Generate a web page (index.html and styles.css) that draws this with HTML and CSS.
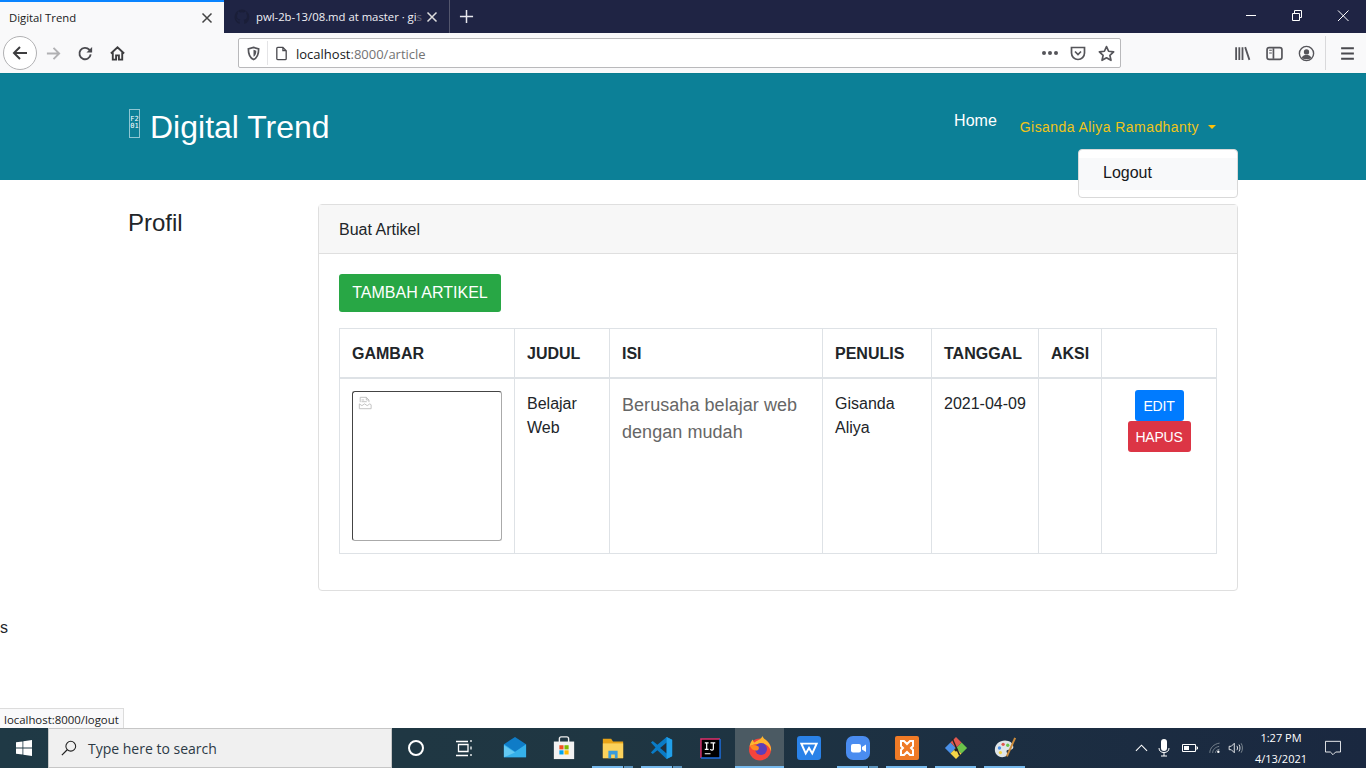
FILE: index.html
```html
<!DOCTYPE html>
<html lang="en">
<head>
<meta charset="utf-8">
<title>Digital Trend</title>
<link rel="stylesheet" href="styles.css">
</head>
<body>
<div class="tabbar">
  <div class="tab tab-active">
    <span class="tab-title">Digital Trend</span>
    <svg class="tab-x" viewBox="0 0 12 12"><path d="M1.500 1.500l9 9M10.500 1.500l-9 9" stroke="#444" stroke-width="1.500"/></svg>
  </div>
  <div class="tab tab-idle">
    <svg class="tab-fav" viewBox="0 0 16 16"><path d="M8 .5a7.500 7.500 0 0 0-2.400 14.600v-2.600c-2 .4-2.500-1-2.700-1.500-.6-1-1.300-.9-.6-1.200.9 0 1.400 1 1.900 1.400.6.400 1.300.3 1.600 0 .1-.5.300-.8.500-1C4.600 10.500 3 9.700 3 6.900c0-.9.300-1.600.8-2.200-.1-.3-.3-1 .1-2.100 0 0 .7-.2 2.200.8a7.500 7.500 0 0 1 3.800 0c1.500-1 2.200-.8 2.200-.8.400 1.100.2 1.800.1 2.100.5.600.8 1.300.8 2.200 0 2.800-1.600 3.600-3.300 3.800.3.200.5.700.5 1.300v3.100A7.500 7.500 0 0 0 8 .5z" fill="#1a1e38"/></svg>
    <span class="tab-title tab-title-idle">pwl-2b-13/08.md at master · gi<span class="fade">s</span></span>
    <svg class="tab-x" viewBox="0 0 12 12"><path d="M1.500 1.500l9 9M10.500 1.500l-9 9" stroke="#ddd" stroke-width="1.500"/></svg>
  </div>
  <div class="newtab"><svg viewBox="0 0 16 16"><path d="M8 1v14M1 8h14" stroke="#e8e8ee" stroke-width="1.600"/></svg></div>
  <div class="winctl">
    <svg viewBox="0 0 46 32"><path d="M18 15.500h10" stroke="#fff"/></svg>
    <svg viewBox="0 0 46 32"><path d="M18.500 13.500h7v7h-7zM20.500 13v-2.500h7v7h-2" fill="none" stroke="#fff"/></svg>
    <svg viewBox="0 0 46 32"><path d="M18 10.500l10.500 10.500M28.500 10.500l-10.500 10.500" stroke="#fff"/></svg>
  </div>
</div>
<div class="toolbar">
  <div class="backbtn"><svg viewBox="0 0 18 18"><path d="M16 9H3M9 3L3 9l6 6" fill="none" stroke="#3d3d3f" stroke-width="2"/></svg></div>
  <svg class="tool tool-fwd" viewBox="0 0 18 18"><path d="M2 9h13M9 3l6 6-6 6" fill="none" stroke="#b1b1b3" stroke-width="2"/></svg>
  <svg class="tool tool-reload" viewBox="0 0 18 18"><path d="M14.500 10a6 6 0 1 1-1.500-5l2 2" fill="none" stroke="#4a4a4f" stroke-width="2"/><path d="M16 2v6h-6z" fill="#4a4a4f"/></svg>
  <svg class="tool tool-home" viewBox="0 0 18 18"><path d="M2 9l7-6.500L16 9M4 8v7.500h3.500V11h3v4.500H14V8" fill="none" stroke="#3d3d3f" stroke-width="2"/></svg>
  <div class="urlbar">
    <svg class="shield" viewBox="0 0 16 16"><path d="M8 1.500l5.500 1.500c0 6-1 9.500-5.500 11.500C3.500 12.500 2.500 9 2.500 3z" fill="none" stroke="#55555a" stroke-width="1.800"/><path d="M8 4v7.500c2-1.200 3-3 3-6.500z" fill="#55555a"/></svg>
    <span class="urlsep"></span>
    <svg class="pageicon" viewBox="0 0 16 16"><path d="M3 2.500a1 1 0 0 1 1-1h5.500l3.500 3.500v8.500a1 1 0 0 1-1 1H4a1 1 0 0 1-1-1z M9.500 1.500v3.500H13" fill="none" stroke="#4a4a4f" stroke-width="1.400"/></svg>
    <span class="url">localhost<span class="url-dim">:8000/article</span></span>
    <span class="urlspace"></span>
    <span class="dots"><i></i><i></i><i></i></span>
    <svg class="pocket" viewBox="0 0 16 16"><path d="M1.500 2.500h13v5.500a6.500 6.500 0 0 1-13 0z" fill="none" stroke="#55555a" stroke-width="1.700"/><path d="M5 6.500l3 3 3-3" fill="none" stroke="#55555a" stroke-width="1.700"/></svg>
    <svg class="star" viewBox="0 0 16 16"><path d="M8 1.500l2 4.400 4.700.6-3.500 3.200 1 4.700L8 12l-4.200 2.400 1-4.700L1.300 6.500 6 5.900z" fill="none" stroke="#55555a" stroke-width="1.600" stroke-linejoin="round"/></svg>
  </div>
  <div class="toolright">
    <svg class="tool" viewBox="0 0 16 16"><path d="M2 2v12M5 2v12M8 2v12M10.500 2l4 12" fill="none" stroke="#55555a" stroke-width="1.700"/></svg>
    <svg class="tool" viewBox="0 0 16 16"><rect x="1" y="2.500" width="14" height="11" rx="2" fill="none" stroke="#55555a" stroke-width="1.600"/><path d="M7 3v10" stroke="#55555a" stroke-width="1.600"/><path d="M3 5h2.500M3 7.500h2.500" stroke="#55555a"/></svg>
    <svg class="tool" viewBox="0 0 16 16"><circle cx="8" cy="8" r="6.700" fill="none" stroke="#55555a" stroke-width="1.300"/><circle cx="8" cy="6.500" r="2.500" fill="#55555a"/><path d="M3.500 12c1-2 2.500-2.500 4.500-2.500s3.500.5 4.500 2.500c-2 2-7 2-9 0z" fill="#55555a"/></svg>
    <span class="toolsep"></span>
    <svg class="tool" viewBox="0 0 16 16"><path d="M2 3h12M2 8h12M2 13h12" stroke="#4a4a4f" stroke-width="1.800"/></svg>
  </div>
</div>
<div class="page">
  <header class="site-header">
    <div class="container nav">
      <a class="brand"><span class="tofu"><span>F2</span><span>01</span></span><span>Digital Trend</span></a>
      <div class="navlinks">
        <a class="nav-home">Home</a>
        <a class="nav-user">Gisanda Aliya Ramadhanty<span class="caret"></span></a>
      </div>
      <div class="dropdown"><a class="dropdown-item">Logout</a></div>
    </div>
  </header>
  <main class="container content">
    <h4 class="side-title">Profil</h4>
    <section class="card">
      <div class="card-header">Buat Artikel</div>
      <div class="card-body">
        <a class="btn-add">TAMBAH ARTIKEL</a>
        <table class="table">
          <thead>
            <tr>
              <th class="c1">GAMBAR</th>
              <th class="c2">JUDUL</th>
              <th class="c3">ISI</th>
              <th class="c4">PENULIS</th>
              <th class="c5">TANGGAL</th>
              <th class="c6">AKSI</th>
              <th class="c7"></th>
            </tr>
          </thead>
          <tbody>
            <tr>
              <td>
                <div class="broken"><svg viewBox="0 0 16 16"><path d="M2.500 7V1.500h7l3 3V7M9.500 1.500v3h3M4 4.500h3M4 6.500h6" fill="none" stroke="#bbb"/><path d="M1.500 9l3 2 3-2 3 2 3-2 1.500 1v4.500h-13.500z" fill="none" stroke="#bbb"/></svg></div>
              </td>
              <td>Belajar Web</td>
              <td class="isi">Berusaha belajar web dengan mudah</td>
              <td>Gisanda Aliya</td>
              <td>2021-04-09</td>
              <td></td>
              <td class="aksi"><a class="btn-sm btn-edit">EDIT</a><a class="btn-sm btn-del">HAPUS</a></td>
            </tr>
          </tbody>
        </table>
      </div>
    </section>
  </main>
  <p class="stray">s</p>
  <div class="status">localhost:8000/logout</div>
</div>
<footer class="taskbar">
  <div class="start"><svg viewBox="0 0 16 16"><path d="M0 2.300l6.500-.9v6.200H0zM7.300 1.300L16 0v7.600H7.300zM0 8.400h6.500v6.200L0 13.700zM7.300 8.400H16V16l-8.700-1.200z" fill="#fff"/></svg></div>
  <div class="search">
    <svg viewBox="0 0 18 18"><circle cx="11" cy="7" r="5.500" fill="none" stroke="#222" stroke-width="1.200"/><path d="M7 11l-6 6" stroke="#222" stroke-width="1.400"/></svg>
    <span>Type here to search</span>
  </div>
  <div class="apps">
    <div class="app app-cortana"><svg viewBox="0 0 24 24"><circle cx="12" cy="12" r="7" fill="none" stroke="#fff" stroke-width="2"/></svg></div>
    <div class="app app-tasks"><svg viewBox="0 0 24 24"><path d="M5 5.500h12M5 19.500h12M7.500 8.500h9.500v7H7.500zM20 4v2M20 10.500v3M20 18v2" fill="none" stroke="#fff" stroke-width="1.300"/></svg></div>
    <div class="app"><svg viewBox="0 0 26 26"><path d="M1 9l12-8 12 8v14H1z" fill="#0f7cc7"/><path d="M1 9l12 8 12-8v14H1z" fill="#35b0ea"/><path d="M1 10l12 8L1 23z" fill="#63c8f2"/></svg></div>
    <div class="app"><svg viewBox="0 0 26 26"><path d="M8 7V3a2 2 0 0 1 2-2h6a2 2 0 0 1 2 2v4" fill="none" stroke="#eee" stroke-width="1.500"/><rect x="2" y="6" width="22" height="19" fill="#f2f2f2"/><rect x="8" y="10" width="4.500" height="4.500" fill="#f25022"/><rect x="13.500" y="10" width="4.500" height="4.500" fill="#7fba00"/><rect x="8" y="15.500" width="4.500" height="4.500" fill="#00a4ef"/><rect x="13.500" y="15.500" width="4.500" height="4.500" fill="#ffb900"/></svg></div>
    <div class="app app-run app-split"><svg viewBox="0 0 26 26"><path d="M2 3h9l2 3h11v18H2z" fill="#e8a317"/><path d="M2 8h22v16H2z" fill="#fbd25c"/><path d="M8 24v-8h10v8h-3v-4h-4v4z" fill="#3a9bdc"/></svg></div>
    <div class="app app-run app-split"><svg viewBox="0 0 26 26"><path d="M18 1l6 3v18l-6 3-10-9.500-5 4-2-1.500 5-5.500-5-5.500 2-1.500 5 4z" fill="#0a7bc6"/><path d="M18 7v12l-7-6z" fill="#1f2f3d"/><path d="M18 1l6 3v18l-6 3z" fill="#21a0ea"/></svg></div>
    <div class="app app-ij"><svg viewBox="0 0 22 22"><rect x="1" y="1" width="20" height="20" fill="#000"/><path d="M1 21V1h20" fill="none" stroke="#e0306e" stroke-width="1.500"/><path d="M21 1v20H1" fill="none" stroke="#1e6fe0" stroke-width="1.500"/><path d="M5 5h4M7 5v7M5 12h4M11 5h5M14 5v6a1.500 1.500 0 0 1-3 .500M5 16.500h6" fill="none" stroke="#fff" stroke-width="1.300"/></svg></div>
    <div class="app app-run app-on"><svg viewBox="0 0 26 26"><circle cx="13" cy="14.500" r="11" fill="#f5443c"/><path d="M2.500 12C3 8 4.500 5.500 6 4.500c0 1.500.5 2.500 1.500 3C10 5 14 5 15.500 1c1 3 3 3 5 5.500 3 3 4 7 3.500 10-1-4-4-8-10-8-3 0-5 1-7 1-2 .500-4 1-5 2.500z" fill="#ffb52e"/><circle cx="14" cy="14" r="6" fill="#5c3fb8"/><path d="M3 11c3-2 6-1 8.500.500 1 2 0 3.500-1.500 4-2.500.500-6-1-7-4.500z" fill="#ff8a1f"/></svg></div>
    <div class="app"><svg viewBox="0 0 22 22"><rect width="22" height="22" rx="3" fill="#2a82e8"/><path d="M4 7h14l-4 9-3-5-3 5z" fill="none" stroke="#fff" stroke-width="1.800"/></svg></div>
    <div class="app app-run app-split"><svg viewBox="0 0 24 24"><rect width="24" height="24" rx="7" fill="#4a8cf0"/><rect x="5" y="8" width="10" height="8.500" rx="2" fill="#fff"/><path d="M16 11l4-2.500v7.500l-4-2.500z" fill="#fff"/></svg></div>
    <div class="app app-run"><svg viewBox="0 0 24 24"><rect width="24" height="24" rx="2" fill="#ef7a26"/><path d="M6 5h3l3 3 3-3h3v5l-2 2 2 2v5h-3l-3-3-3 3H6v-5l2-2-2-2z" fill="none" stroke="#fff" stroke-width="2"/></svg></div>
    <div class="app app-run"><svg viewBox="0 0 26 26"><path d="M7 7l6 6-6 6-6-6z" fill="#4a90e8"/><path d="M19 7l6 6-6 6-6-6z" fill="#6cc24a"/><path d="M13 13l6 6-6 6-6-6z" fill="#f5d547"/><path d="M13 1l6 6-6 6-6-6z" fill="#e0584f"/><path d="M9 3l8 18" stroke="#222" stroke-width="1.500"/><circle cx="13" cy="15" r="1.800" fill="#222"/></svg></div>
    <div class="app app-run"><svg viewBox="0 0 26 26"><path d="M2 15c0-6 5-10 11-10 5 0 9 3 9 7 0 3-3 3-5 3s-3 1-2 3c1 3-1 5-5 5-5 0-8-4-8-8z" fill="#dfe5e8"/><circle cx="7" cy="13" r="1.800" fill="#4a90e8"/><circle cx="11" cy="9" r="1.800" fill="#e0584f"/><circle cx="16" cy="10" r="1.800" fill="#6cc24a"/><circle cx="8" cy="18" r="1.800" fill="#f5d547"/><path d="M15 22L24 2" stroke="#c98a3c" stroke-width="2.200"/></svg></div>
  </div>
  <div class="tray">
    <svg class="t-chev" viewBox="0 0 14 8"><path d="M1 7l6-6 6 6" fill="none" stroke="#fff" stroke-width="1.200"/></svg>
    <svg class="t-mic" viewBox="0 0 12 18"><rect x="3" y="0" width="6" height="12" rx="3" fill="#fff"/><path d="M1 9c0 3 2 4.500 5 4.500s5-1.500 5-4.500M6 13.500V17M3 17h6" fill="none" stroke="#fff"/></svg>
    <svg class="t-bat" viewBox="0 0 16 10"><path d="M.5 1.500h13v7H.5zM14 4h1.500v2H14" fill="none" stroke="#fff"/><rect x="2" y="3" width="5" height="4" fill="#fff"/></svg>
    <svg class="t-wifi" viewBox="0 0 16 14"><path d="M1 13C1 7 6 2 13 1M4.500 13c0-4 3-7 8-8M8 13c0-2 1.500-4 5-4.500" fill="none" stroke="#8a949c"/><circle cx="11.500" cy="11.500" r="1.500" fill="#fff"/></svg>
    <svg class="t-vol" viewBox="0 0 18 14"><path d="M1 5h2.500L7 1.500v11L3.500 9H1z" fill="none" stroke="#fff"/><path d="M10 4.500c1 1.500 1 3.500 0 5M12.500 3c1.500 2.500 1.500 5.500 0 8" fill="none" stroke="#fff"/><path d="M15 1.500c2 3 2 8 0 11" fill="none" stroke="#8a949c"/></svg>
    <div class="clock"><span>1:27 PM</span><span>4/13/2021</span></div>
    <svg class="t-note" viewBox="0 0 18 16"><path d="M.5.500h17v12h-5.500l-3 3-3-3H.5z" fill="none" stroke="#fff"/></svg>
  </div>
</footer>
</body>
</html>
```

FILE: styles.css
```css
* { box-sizing: border-box; }
html, body { margin: 0; height: 768px; overflow: hidden; }
body {
  display: flex;
  flex-direction: column;
  width: 1366px;
  font-family: "Liberation Sans", Arial, sans-serif;
  font-size: 16px;
  line-height: 24px;
  color: #212529;
  background: #fff;
}

/* Browser tab strip */
.tabbar {
  display: flex;
  height: 33px;
  flex: none;
  background: #1f2444;
  font-family: "Open Sans", "Noto Sans", sans-serif;
  font-size: 11.3px;
}
.tab { display: flex; align-items: center; height: 33px; }
.tab-active {
  width: 224px;
  padding: 0 11px 0 9px;
  background: #f9f9fa;
  border-top: 2px solid #0a84ff;
  color: #18191a;
}
.tab-idle {
  width: 226px;
  padding: 0 11px 0 10px;
  color: #f0f0f4;
  border-right: 1px solid #53566d;
}
.tab-title { flex: 1; white-space: nowrap; }
.tab-title-idle { margin-left: 6px; }
.fade { opacity: .35; }
.tab-x { width: 12px; height: 12px; flex: none; }
.tab-fav { width: 16px; height: 16px; flex: none; }
.newtab { width: 32px; display: flex; align-items: center; justify-content: center; }
.newtab svg { width: 15px; height: 15px; }
.winctl { margin-left: auto; display: flex; }
.winctl svg { width: 46px; height: 32px; }

/* Browser toolbar */
.toolbar {
  display: flex;
  align-items: center;
  height: 41px;
  flex: none;
  background: #f9f9fa;
  padding-left: 3px;
  border-bottom: 1px solid #0a7d90;
}
.backbtn {
  width: 34px;
  height: 34px;
  border: 1px solid #b1b1b3;
  border-radius: 50%;
  background: #fff;
  display: flex;
  align-items: center;
  justify-content: center;
}
.backbtn svg { width: 18px; height: 18px; }
.tool { width: 17px; height: 17px; flex: none; }
.tool-fwd { margin-left: 8px; }
.tool-reload { margin-left: 15px; }
.tool-home { margin-left: 15px; }
.urlbar {
  display: flex;
  align-items: center;
  width: 883px;
  height: 30px;
  margin-left: 112px;
  background: #fff;
  border: 1px solid #b9b9bb;
  border-radius: 2px;
  font-family: "Open Sans", "Noto Sans", sans-serif;
  font-size: 13px;
}
.shield { width: 15px; height: 15px; margin-left: 7px; flex: none; }
.urlsep { width: 1px; height: 24px; background: #e4e4e6; margin-left: 6px; }
.pageicon { width: 15px; height: 15px; margin-left: 6px; flex: none; }
.url { margin-left: 7px; padding-top: 2px; color: #18191a; }
.url-dim { color: #737373; }
.urlspace { flex: 1; }
.dots { display: flex; gap: 2px; margin-right: 12px; }
.dots i { width: 4px; height: 4px; border-radius: 50%; background: #55555a; }
.pocket { width: 16px; height: 16px; margin-right: 12px; flex: none; }
.star { width: 17px; height: 17px; margin-right: 5px; flex: none; }
.toolright { display: flex; align-items: center; margin-left: 113px; gap: 15px; }
.toolsep { width: 1px; height: 34px; background: #d9d9db; margin: 0 -2px 0 -5px; }

/* Page */
.page {
  position: relative;
  flex: 1;
  min-height: 0;
}
.container { width: 1110px; margin: 0 auto; }
.site-header {
  height: 106px;
  background: #0c8097;
}
.nav { position: relative; display: flex; height: 106px; }
.brand { display: flex; align-items: center; gap: 10px; color: #fff; font-size: 32px; line-height: 40px; margin-left: 1px; height: 105px; }
.tofu {
  width: 11px;
  height: 29px;
  margin-bottom: 7px;
  border: 1px solid #8fc6d2;
  display: flex;
  flex-direction: column;
  align-items: center;
  justify-content: center;
  font-family: "DejaVu Sans Mono", monospace;
  font-size: 7px;
  line-height: 7px;
}
.navlinks { display: flex; margin-left: auto; margin-right: 22px; padding-top: 36px; }
.nav-home { color: #fff; font-size: 16px; line-height: 22px; margin-right: 23px; }
.nav-user { display: flex; align-items: center; height: 34px; color: #f0c419; font-size: 14px; letter-spacing: .43px; }
.caret { width: 0; height: 0; margin-left: 9px; border: 4.500px solid transparent; border-top-color: #ffc107; border-bottom-width: 0; }
.dropdown {
  position: absolute;
  right: 0;
  top: 75px;
  width: 160px;
  height: 49px;
  padding: 8px 0;
  background: #fff;
  border: 1px solid #d9d9d9;
  border-radius: 4px;
}
.dropdown-item { display: block; padding: 3px 24px; height: 32px; background: #f8f9fa; color: #16181b; line-height: 24px; }
.content {
  display: grid;
  grid-template-columns: 190px 920px;
  align-items: start;
  margin-top: 24px;
}
.side-title { margin: 4px 0 0; font-size: 24px; font-weight: 400; line-height: 29px; color: #212529; }
.card { height: 387px; border: 1px solid #dfdfdf; border-radius: 4px; }
.card-header {
  height: 49px;
  padding: 13px 20px 0;
  background: #f7f7f7;
  border-bottom: 1px solid #dfdfdf;
}
.card-body { padding: 20px; }
.btn-add {
  display: inline-block;
  height: 38px;
  width: 162px;
  padding: 7px 0;
  text-align: center;
  background: #28a745;
  color: #fff;
  border-radius: 3px;
  white-space: nowrap;
  vertical-align: top;
}
.table {
  width: 877px;
  margin-top: 16px;
  table-layout: fixed;
  border-collapse: collapse;
}
.table th, .table td { border: 1px solid #dee2e6; vertical-align: top; padding: 12px; }
.table th { height: 49px; padding-top: 13px; padding-bottom: 10px; text-align: left; border-bottom-width: 2px; white-space: nowrap; font-weight: 700; }
.table td { height: 175px; padding-top: 13px; }
.c1 { width: 175px; }
.c2 { width: 95px; }
.c3 { width: 213px; }
.c4 { width: 109px; }
.c5 { width: 107px; }
.c6 { width: 63px; }
.c7 { width: 115px; }
.table .isi { font-size: 18px; line-height: 27px; color: #666; letter-spacing: .05px; }
.broken {
  width: 150px;
  height: 150px;
  margin-top: -1px;
  border: 1px solid;
  border-color: #444 #aaa #aaa #444;
  border-radius: 3px;
  padding: 4px 5px;
}
.broken svg { display: block; width: 14px; height: 14px; }
.table .aksi { text-align: center; padding: 11px 0; }
.btn-sm {
  display: block;
  height: 31px;
  margin: 0 auto;
  color: #fff;
  font-size: 14px;
  letter-spacing: -.2px;
  line-height: 32px;
  border-radius: 3px;
}
.btn-edit { width: 49px; background: #007bff; }
.btn-del { width: 63px; background: #dc3545; }
.stray { margin: 25px 0 0; }
.status {
  position: absolute;
  left: 0;
  bottom: 0;
  height: 20px;
  padding: 0 4px;
  background: #f9f9fa;
  border: 1px solid #dcdcdc;
  border-left: 0;
  border-bottom: 0;
  color: #222;
  font-family: "Open Sans", "Noto Sans", sans-serif;
  font-size: 11.400px;
  line-height: 21px;
}

/* Windows taskbar */
.taskbar {
  display: flex;
  align-items: stretch;
  flex: none;
  height: 40px;
  background: linear-gradient(90deg, #1f3945 0%, #1f3642 45%, #1c2f42 70%, #1a2840 100%);
  color: #fff;
  font-family: "Open Sans", "Noto Sans", sans-serif;
}
.start { width: 48px; display: flex; align-items: center; justify-content: center; }
.start svg { width: 16px; height: 16px; }
.search {
  width: 344px;
  display: flex;
  align-items: center;
  gap: 11px;
  padding: 2px 0 0 12px;
  background: #f0f0f0;
  border: 1px solid #c6c6c6;
  color: #2c3a45;
  font-size: 14px;
}
.search svg { width: 16px; height: 16px; margin-bottom: 2px; }
.apps { display: flex; }
.app {
  position: relative;
  width: 49px;
  display: flex;
  align-items: center;
  justify-content: center;
}
.app svg { width: 24px; height: 24px; }
.app-cortana { width: 48px; }
.app-tasks { width: 46px; margin-right: 4px; }
.app-ij svg { width: 21px; height: 21px; }
.app-on svg { width: 26px; height: 26px; }
.app-run::after {
  content: "";
  position: absolute;
  left: 4px;
  right: 4px;
  bottom: 0;
  height: 2px;
  background: #76b9ed;
}
.app-split::after {
  background: linear-gradient(90deg, #76b9ed 76%, #1f3642 76%, #1f3642 78%, #5b93bd 78%);
}
.app-on { background: #4b5a63; }
.app-on::after { left: 0; right: 0; }
.tray { display: flex; align-items: center; margin-left: auto; padding-right: 25px; }
.t-chev { width: 13px; height: 8px; margin-right: 10px; }
.t-mic { width: 12px; height: 18px; margin-right: 12px; }
.t-bat { width: 16px; height: 10px; margin-right: 11px; }
.t-wifi { width: 13px; height: 12px; margin-right: 6px; }
.t-vol { width: 16px; height: 12px; margin-right: 5px; }
.clock { display: flex; flex-direction: column; align-items: center; width: 64px; font-size: 11px; line-height: 21px; margin-right: 12px; }
.t-note { width: 16px; height: 16px; }
```
